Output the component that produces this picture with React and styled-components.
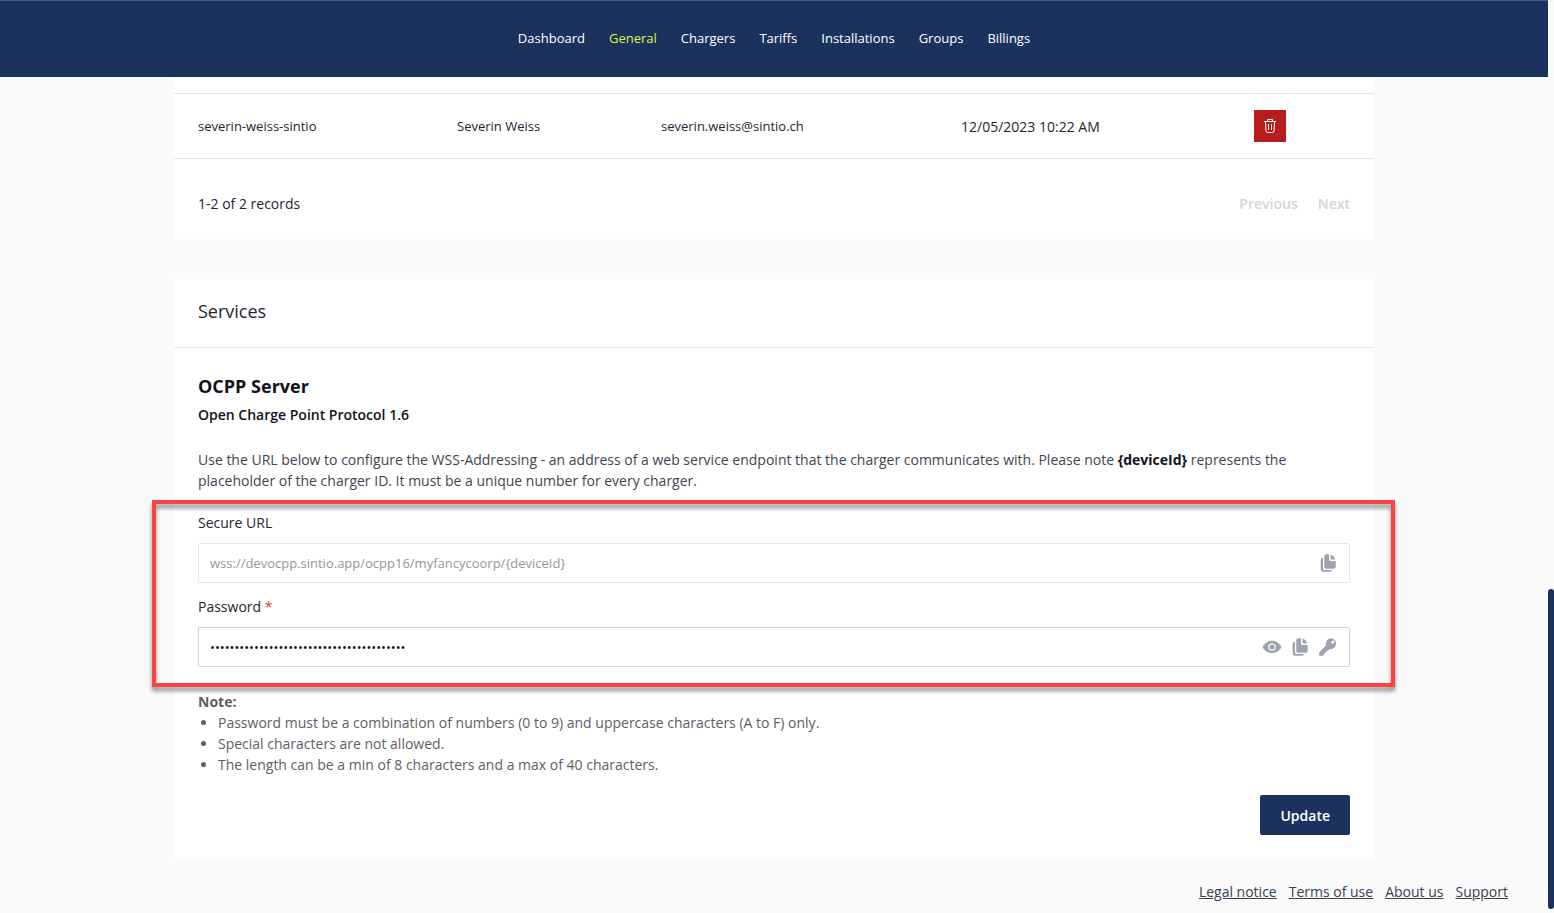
import React, { useState } from 'react'
import styled, { createGlobalStyle } from 'styled-components'
import { IoEye } from 'react-icons/io5'

const NavItems = ['Dashboard', 'General', 'Chargers', 'Tariffs', 'Installations', 'Groups', 'Billings']

const Users = [
  {
    id: 'severin-weiss-sintio',
    name: 'Severin Weiss',
    email: 'severin.weiss@sintio.ch',
    date: '12/05/2023 10:22 AM'
  }
]

const Notes = [
  'Password must be a combination of numbers (0 to 9) and uppercase characters (A to F) only.',
  'Special characters are not allowed.',
  'The length can be a min of 8 characters and a max of 40 characters.'
]

const FooterLinks = ['Legal notice', 'Terms of use', 'About us', 'Support']

function TrashIcon() {
  return (
    <svg width="14" height="16" viewBox="0 0 14 16" fill="none" stroke="currentColor" strokeLinejoin="round">
      <path d="M1 3.5h12" />
      <path d="M4.5 3.5v-2h5v2" />
      <path d="M2.5 3.5l.4 9.2q.1 1.8 1.6 1.8h5q1.5 0 1.6-1.8l.4-9.2" />
      <path d="M5.5 6v6M8.5 6v6" />
    </svg>
  )
}

function CopyIcon() {
  return (
    <svg width="20" height="20" viewBox="0 0 20 20" fill="currentColor">
      <path d="M8 1.3h3v5a1.600 1.600 0 0 0 1.600 1.600h5.100v6.100a1.700 1.700 0 0 1-1.700 1.700H8a1.700 1.700 0 0 1-1.700-1.700V3A1.700 1.700 0 0 1 8 1.300z" />
      <path d="M12.600 1.500q3.300 1 4.700 4.900h-4.100a.6.600 0 0 1-.6-.6z" />
      <path d="M5 5v10.200a1.900 1.900 0 0 0 1.900 1.900H14a1.900 1.900 0 0 1-1.800 1.700h-7a2.500 2.500 0 0 1-2.500-2.500V6.900A1.900 1.900 0 0 1 5 5z" />
    </svg>
  )
}

function KeyIcon() {
  return (
    <svg width="20" height="20" viewBox="0 0 20 20" fill="currentColor" fillRule="evenodd">
      <path d="M13.3 1.2a5.5 5.5 0 1 1-1.5 10.9L10 13.8H8.3v1.7H6.5v1.6l-1.7 1.7H1.7a.6.6 0 0 1-.6-.6v-2.8l7-7.1A5.5 5.5 0 0 1 13.3 1.2zM14.8 3.600a1.500 1.500 0 1 0 .1 3a1.500 1.500 0 0 0-.1-3z" />
    </svg>
  )
}

function App() {
  const [password, setPassword] = useState('A1B2C3D4E5F60718293A4B5C6D7E8F9001122334')
  const [visible, setVisible] = useState(false)

  return (
    <Page>
      <GlobalStyle />
      <Content>
        <Header>
          <Nav>
            {NavItems.map(item => (
              <NavLink href="#" key={item} $active={item === 'General'}>{item}</NavLink>
            ))}
          </Nav>
        </Header>

        <Main>
          <UsersCard>
            <Table>
              <colgroup>
                <Col $width="259px" />
                <Col $width="204px" />
                <Col $width="300px" />
                <Col $width="293px" />
                <Col />
              </colgroup>
              <tbody>
                {Users.map(user => (
                  <tr key={user.id}>
                    <Cell>{user.id}</Cell>
                    <Cell>{user.name}</Cell>
                    <Cell>{user.email}</Cell>
                    <Cell $large>{user.date}</Cell>
                    <Cell>
                      <DeleteButton type="button" aria-label="Delete"><TrashIcon /></DeleteButton>
                    </Cell>
                  </tr>
                ))}
              </tbody>
            </Table>
            <Pagination>
              <span>1-2 of 2 records</span>
              <Pager>
                <PagerButton type="button" disabled>Previous</PagerButton>
                <PagerButton type="button" disabled>Next</PagerButton>
              </Pager>
            </Pagination>
          </UsersCard>

          <Card>
            <CardHeader>Services</CardHeader>
            <CardBody>
              <Title>OCPP Server</Title>
              <SubTitle>Open Charge Point Protocol 1.6</SubTitle>
              <Description>
                Use the URL below to configure the WSS-Addressing - an address of a web service endpoint that the
                charger communicates with. Please note <strong>{'{deviceId}'}</strong> represents the placeholder of
                the charger ID. It must be a unique number for every charger.
              </Description>

              <Fields>
                <Field>
                  <Label htmlFor="secure-url">Secure URL</Label>
                  <InputBox $disabled>
                    <Input id="secure-url" disabled value="wss://devocpp.sintio.app/ocpp16/myfancycoorp/{deviceId}" />
                    <IconButton type="button" aria-label="Copy URL"><CopyIcon /></IconButton>
                  </InputBox>
                </Field>
                <Field>
                  <Label htmlFor="password">Password <Required>*</Required></Label>
                  <InputBox>
                    <Input
                      id="password"
                      type={visible ? 'text' : 'password'}
                      value={password}
                      maxLength={40}
                      onChange={e => setPassword(e.target.value)}
                    />
                    <IconButton type="button" aria-label="Show password" onClick={() => setVisible(!visible)}>
                      <IoEye />
                    </IconButton>
                    <IconButton type="button" aria-label="Copy password"><CopyIcon /></IconButton>
                    <IconButton type="button" aria-label="Generate password"><KeyIcon /></IconButton>
                  </InputBox>
                </Field>
                <Highlight />
              </Fields>

              <NoteBlock>
                <strong>Note:</strong>
                <ul>
                  {Notes.map(note => <li key={note}>{note}</li>)}
                </ul>
              </NoteBlock>

              <Actions>
                <UpdateButton type="button">Update</UpdateButton>
              </Actions>
            </CardBody>
          </Card>
        </Main>

        <Footer>
          {FooterLinks.map(link => <a href="#" key={link}>{link}</a>)}
        </Footer>
      </Content>
      <ScrollRail>
        <ScrollThumb />
      </ScrollRail>
    </Page>
  )
}

const GlobalStyle = createGlobalStyle`
  * {
    box-sizing: border-box;
  }

  body {
    margin: 0;
    background: #fafafa;
    color: #1f2430;
    font-family: 'Open Sans', sans-serif;
    font-size: 14px;
    line-height: 21px;
  }

  button, input {
    font-family: inherit;
  }
`

const Page = styled.div`
  display: grid;
  grid-template-columns: minmax(0, 1fr) 6px;
  min-height: 100vh;
`

const Content = styled.div`
  display: flex;
  flex-direction: column;
`

const Header = styled.header`
  display: flex;
  justify-content: center;
  height: 77px;
  padding-top: 27px;
  background: #1b325f;
  border-top: 1px solid #41597f;
`

const Nav = styled.nav`
  display: flex;
  gap: 24px;
`

const NavLink = styled.a`
  font-size: 13px;
  font-weight: 500;
  line-height: 20px;
  text-decoration: none;
  color: ${props => (props.$active ? '#ddf53c' : '#ffffff')};
`

const Main = styled.main`
  display: flex;
  flex-direction: column;
  gap: 40px;
  width: 100%;
  max-width: 1200px;
  margin: 0 auto;
`

const Card = styled.section`
  background: white;
`

const UsersCard = styled(Card)`
  padding-top: 16px;
`

const Table = styled.table`
  width: 100%;
  table-layout: fixed;
  border-collapse: separate;
  border-spacing: 0;
  border-top: 1px solid #e5e7eb;
`

const Col = styled.col`
  width: ${props => props.$width || 'auto'};
`

const Cell = styled.td`
  height: 65px;
  padding: 0 24px;
  vertical-align: middle;
  font-size: ${props => (props.$large ? '14px' : '13px')};
  border-bottom: 1px solid #e5e7eb;
`

const DeleteButton = styled.button`
  display: flex;
  align-items: center;
  justify-content: center;
  width: 32px;
  height: 32px;
  padding: 0;
  border: none;
  color: white;
  background: #b91c1c;
  cursor: pointer;
`

const Pagination = styled.div`
  display: flex;
  justify-content: space-between;
  padding: 34px 24px 25px;
`

const Pager = styled.div`
  display: flex;
  gap: 20px;
`

const PagerButton = styled.button`
  padding: 0;
  border: none;
  background: none;
  font-size: 14px;
  font-weight: 600;
  line-height: 21px;
  color: #d1d5db;
`

const CardHeader = styled.h2`
  margin: 0;
  padding: 18px 24px 22px;
  font-size: 18px;
  font-weight: 500;
  line-height: 28px;
  border-bottom: 1px solid #e5e7eb;
`

const CardBody = styled.div`
  padding: 24px;
`

const Title = styled.h3`
  margin: 0 0 4px;
  font-size: 18px;
  font-weight: 700;
  line-height: 28px;
  color: #111318;
`

const SubTitle = styled.h4`
  margin: 0 0 24px;
  font-size: 14px;
  font-weight: 600;
  line-height: 21px;
  color: #111318;
`

const Description = styled.p`
  margin: 0 0 21px;
  color: #3f4550;

  strong {
    color: #111318;
  }
`

const Fields = styled.div`
  position: relative;
  display: flex;
  flex-direction: column;
  gap: 13px;
`

const Field = styled.div`
  display: flex;
  flex-direction: column;
  gap: 10px;
`

const Label = styled.label`
  color: #1f2430;
`

const Required = styled.span`
  color: #ef2b2b;
`

const InputBox = styled.div`
  display: flex;
  align-items: center;
  gap: 8px;
  height: 40px;
  padding: 0 11px;
  border: 1px solid ${props => (props.$disabled ? '#e5e7eb' : '#d1d5db')};
  border-radius: 2px;
`

const Input = styled.input`
  flex: 1;
  min-width: 0;
  padding: 0;
  border: none;
  outline: none;
  background: transparent;
  font-size: 13px;
  color: #111318;

  &:disabled {
    color: #94979c;
  }
`

const IconButton = styled.button`
  display: flex;
  padding: 0;
  border: none;
  background: none;
  font-size: 20px;
  color: #9ca3af;
  cursor: pointer;
`

/* red callout drawn over the two fields */
const Highlight = styled.div`
  position: absolute;
  inset: -12px -45px -20px -46px;
  border: 4px solid #fc4242;
  filter: drop-shadow(0 4px 2px rgba(0, 0, 0, 0.45));
  pointer-events: none;
`

const NoteBlock = styled.div`
  margin-top: 24px;
  color: #5b5f66;

  ul {
    margin: 0;
    padding-left: 20px;
  }
`

const Actions = styled.div`
  display: flex;
  justify-content: flex-end;
  margin-top: 20px;
`

const UpdateButton = styled.button`
  height: 40px;
  padding: 0 20px;
  border: none;
  border-radius: 2px;
  font-size: 14px;
  font-weight: 600;
  color: white;
  background: #1b325f;
  cursor: pointer;
`

const Footer = styled.footer`
  display: flex;
  justify-content: flex-end;
  gap: 12px;
  padding: 22px 40px 11px;

  a {
    color: #374151;
  }
`

const ScrollRail = styled.div`
  display: flex;
  flex-direction: column;
  justify-content: flex-end;
  padding-bottom: 4px;
`

const ScrollThumb = styled.div`
  height: 320px;
  border-radius: 3px;
  background: #1b325f;
`

export default App
